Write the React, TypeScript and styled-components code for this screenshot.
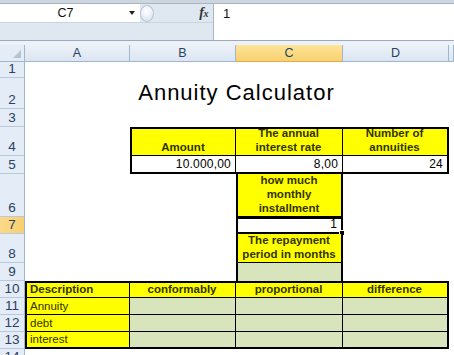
import styled, { createGlobalStyle } from 'styled-components';

const GlobalStyle = createGlobalStyle`
  *, *::before, *::after { box-sizing: border-box; }
  html, body { margin: 0; padding: 0; background: #fff; }
  body { font-family: 'Liberation Sans', Arial, sans-serif; overflow: hidden; }
`;

const YELLOW = '#ffff00';
const GREEN = '#d8e4bc';
const WHITE = '#ffffff';

const COLUMNS = ['A', 'B', 'C', 'D', 'E'];
const ROW_HEIGHTS = [16, 31, 18, 29, 18, 43, 17, 29, 18, 17, 17, 17, 17, 17];

const Window = styled.div`
  width: 454px;
  height: 355px;
  overflow: hidden;
  display: flex;
  flex-direction: column;
  background: #fff;
`;

const TopStrip = styled.div`
  height: 4px;
  background: #cdd5df;
  border-bottom: 1px solid #a9b5c4;
`;

const FormulaBar = styled.div`
  display: flex;
  height: 36px;
`;

const NameSide = styled.div`
  width: 213px;
  display: flex;
  flex-direction: column;
  background: #dfe7f1;
`;

const NameRow = styled.div`
  height: 18px;
  display: flex;
  align-items: center;
`;

const NameBox = styled.div`
  width: 140px;
  height: 18px;
  background: #fff;
  display: flex;
  align-items: center;
  font-size: 12.5px;
  color: #111;
`;

const NameText = styled.span`
  flex: 1;
  text-align: center;
  padding-left: 2px;
`;

const DropArrow = styled.span`
  width: 0;
  height: 0;
  margin-right: 5px;
  border-left: 3.5px solid transparent;
  border-right: 3.5px solid transparent;
  border-top: 4px solid #222;
`;

const Grip = styled.div`
  width: 14px;
  height: 17px;
  border-radius: 50%;
  border: 1px solid #b9c5d3;
  background: radial-gradient(circle at 45% 35%, #ffffff 0%, #e8edf4 55%, #d4dce7 100%);
`;

const FxLabel = styled.span`
  margin-left: auto;
  margin-right: 5px;
  font-family: 'Liberation Serif', 'Times New Roman', serif;
  font-style: italic;
  font-weight: bold;
  font-size: 14px;
  color: #333;
  letter-spacing: -0.5px;

  small {
    font-size: 10px;
  }
`;

const Band = styled.div`
  flex: 1;
  border-top: 1px solid #c9d4e1;
  background: #dfe7f1;
`;

const FormulaInput = styled.div`
  flex: 1;
  background: #fff;
  border-left: 1px solid #a7b5c6;
  padding: 2px 0 0 9px;
  font-size: 13px;
  color: #111;
`;

const BarGap = styled.div`
  height: 5px;
  border-top: 1px solid #9aabbf;
  background: #eef2f8;
`;

const Sheet = styled.div`
  flex: 1;
  display: grid;
  grid-template-columns: 25px 105px 106px 107px 106px 1fr;
  grid-template-rows: 17px ${ROW_HEIGHTS.map((h) => `${h}px`).join(' ')};
  overflow: hidden;
  background: #fff;
`;

const Corner = styled.div`
  grid-column: 1;
  grid-row: 1;
  position: relative;
  background: #e4ecf7;
  border-right: 1px solid #9eb6ce;
  border-bottom: 1px solid #9eb6ce;

  &::after {
    content: '';
    position: absolute;
    right: 3px;
    bottom: 3px;
    border-left: 8px solid transparent;
    border-bottom: 8px solid #b8c2cf;
  }
`;

const ColHeader = styled.div<{ $col: number; $active?: boolean }>`
  grid-column: ${(p) => p.$col};
  grid-row: 1;
  display: flex;
  align-items: center;
  justify-content: center;
  font-size: 12.5px;
  color: #27415f;
  background: ${(p) =>
    p.$active
      ? 'linear-gradient(#fde49a, #f8d170)'
      : 'linear-gradient(#edf2f9, #dbe5f1)'};
  border-right: 1px solid #9eb6ce;
  border-bottom: 1px solid ${(p) => (p.$active ? '#e3a94a' : '#9eb6ce')};
`;

const RowHeader = styled.div<{ $row: number; $active?: boolean }>`
  grid-column: 1;
  grid-row: ${(p) => p.$row + 1};
  display: flex;
  align-items: flex-end;
  justify-content: center;
  padding-bottom: 1px;
  font-size: 13.5px;
  line-height: 15px;
  color: #2b4160;
  background: ${(p) => (p.$active ? 'linear-gradient(90deg, #fbd98a, #f8d070)' : '#e4ecf7')};
  border-right: 1px solid #9eb6ce;
  border-bottom: 1px solid #b8c9dc;
`;

const Title = styled.div`
  grid-column: 3 / span 2;
  grid-row: 3;
  display: flex;
  align-items: flex-end;
  justify-content: center;
  padding-bottom: 3px;
  font-size: 22px;
  letter-spacing: 1px;
  color: #000;
`;

type Kind = 'head' | 'label' | 'value' | 'blank';

const Cell = styled.div<{
  $col: number;
  $row: number;
  $bg: string;
  $kind: Kind;
  $align: string;
  $edges: string;
}>`
  grid-column: ${(p) => p.$col};
  grid-row: ${(p) => p.$row + 1};
  position: relative;
  display: flex;
  flex-direction: column;
  justify-content: flex-end;
  padding: 0 4px 1px 3px;
  background: ${(p) => p.$bg};
  border: 0 solid #000;
  border-width: ${(p) => p.$edges.split(' ').map((n) => `${n}px`).join(' ')};
  text-align: ${(p) => p.$align};
  white-space: pre-line;
  line-height: 14px;
  font-size: ${(p) => (p.$kind === 'value' ? '12px' : '11.5px')};
  font-weight: ${(p) => (p.$kind === 'head' ? 'bold' : 'normal')};
  letter-spacing: ${(p) => (p.$kind === 'value' ? '0.2px' : '0')};
  color: ${(p) => (p.$kind === 'value' ? '#000' : '#333300')};
`;

const FillHandle = styled.span`
  position: absolute;
  right: -4px;
  bottom: -4px;
  width: 6px;
  height: 6px;
  background: #000;
  border: 1px solid #fff;
`;

type CellSpec = {
  col: string;
  row: number;
  text?: string;
  bg: string;
  kind: Kind;
  align?: string;
  edges: string;
  selected?: boolean;
};

const colIndex = (c: string) => COLUMNS.indexOf(c) + 2;

const LABELS: Record<number, string> = { 11: 'Annuity', 12: 'debt', 13: 'interest' };

const lower = [11, 12, 13].flatMap<CellSpec>((row) => {
  const b = row === 13 ? 2 : 1;
  return [
    { col: 'A', row, text: LABELS[row], bg: YELLOW, kind: 'label', align: 'left', edges: `0 1 ${b} 2` },
    { col: 'B', row, bg: GREEN, kind: 'blank', edges: `0 1 ${b} 0` },
    { col: 'C', row, bg: GREEN, kind: 'blank', edges: `0 1 ${b} 0` },
    { col: 'D', row, bg: GREEN, kind: 'blank', edges: `0 2 ${b} 0` },
  ];
});

const CELLS: CellSpec[] = [
  { col: 'B', row: 4, text: 'Amount', bg: YELLOW, kind: 'head', edges: '2 1 1 2' },
  { col: 'C', row: 4, text: 'The annual\ninterest rate', bg: YELLOW, kind: 'head', edges: '2 1 1 0' },
  { col: 'D', row: 4, text: 'Number of\nannuities', bg: YELLOW, kind: 'head', edges: '2 2 1 0' },
  { col: 'B', row: 5, text: '10.000,00', bg: WHITE, kind: 'value', align: 'right', edges: '0 1 2 2' },
  { col: 'C', row: 5, text: '8,00', bg: WHITE, kind: 'value', align: 'right', edges: '0 1 2 0' },
  { col: 'D', row: 5, text: '24', bg: WHITE, kind: 'value', align: 'right', edges: '0 2 2 0' },
  { col: 'C', row: 6, text: 'how much\nmonthly\ninstallment', bg: YELLOW, kind: 'head', edges: '0 2 1 2' },
  { col: 'C', row: 7, text: '1', bg: WHITE, kind: 'value', align: 'right', edges: '2 2 2 2', selected: true },
  { col: 'C', row: 8, text: 'The repayment\nperiod in months', bg: YELLOW, kind: 'head', edges: '0 2 1 2' },
  { col: 'C', row: 9, bg: GREEN, kind: 'blank', edges: '0 2 0 2' },
  { col: 'A', row: 10, text: 'Description', bg: YELLOW, kind: 'head', align: 'left', edges: '2 1 1 2' },
  { col: 'B', row: 10, text: 'conformably', bg: YELLOW, kind: 'head', edges: '2 1 1 0' },
  { col: 'C', row: 10, text: 'proportional', bg: YELLOW, kind: 'head', edges: '2 1 1 0' },
  { col: 'D', row: 10, text: 'difference', bg: YELLOW, kind: 'head', edges: '2 2 1 0' },
  ...lower,
];

export default function App() {
  return (
    <Window>
      <GlobalStyle />
      <TopStrip />
      <FormulaBar>
        <NameSide>
          <NameRow>
            <NameBox>
              <NameText>C7</NameText>
              <DropArrow />
            </NameBox>
            <Grip />
            <FxLabel>
              f<small>x</small>
            </FxLabel>
          </NameRow>
          <Band />
        </NameSide>
        <FormulaInput>1</FormulaInput>
      </FormulaBar>
      <BarGap />
      <Sheet>
        <Corner />
        {COLUMNS.map((c, i) => (
          <ColHeader key={c} $col={i + 2} $active={c === 'C'}>
            {c === 'E' ? '' : c}
          </ColHeader>
        ))}
        {ROW_HEIGHTS.map((_, i) => (
          <RowHeader key={i} $row={i + 1} $active={i + 1 === 7}>
            {i + 1}
          </RowHeader>
        ))}
        <Title>Annuity Calculator</Title>
        {CELLS.map((c) => (
          <Cell
            key={`${c.col}${c.row}`}
            $col={colIndex(c.col)}
            $row={c.row}
            $bg={c.bg}
            $kind={c.kind}
            $align={c.align ?? 'center'}
            $edges={c.edges}
          >
            {c.text ?? ''}
            {c.selected && <FillHandle />}
          </Cell>
        ))}
      </Sheet>
    </Window>
  );
}
